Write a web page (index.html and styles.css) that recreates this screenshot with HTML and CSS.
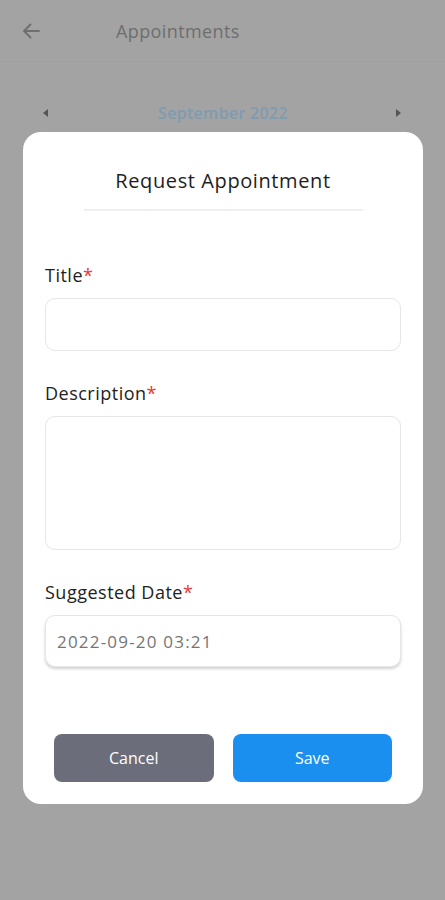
FILE: index.html
```html
<!DOCTYPE html>
<html>
<head>
<meta charset="utf-8">
<link rel="stylesheet" href="styles.css">
</head>
<body>
<div class="page">
  <header class="topbar">
    <span class="back">
      <svg width="20" height="18" viewBox="0 0 20 18"><path d="M18 9H3M9.5 2.5L3 9l6.5 6.5" fill="none" stroke="#6f6f6f" stroke-width="2" stroke-linecap="round" stroke-linejoin="round"/></svg>
    </span>
    <span class="topbar-title">Appointments</span>
  </header>
  <div class="month-row">
    <span class="tri tri-left"></span>
    <span class="month">September 2022</span>
    <span class="tri tri-right"></span>
  </div>
</div>
<div class="modal">
  <h2 class="modal-title">Request Appointment</h2>
  <div class="divider"></div>
  <label class="label label-first">Title<span class="req">*</span></label>
  <div class="field field-title"></div>
  <label class="label">Description<span class="req">*</span></label>
  <div class="field field-desc"></div>
  <label class="label">Suggested Date<span class="req">*</span></label>
  <div class="field field-date">2022-09-20 03:21</div>
  <div class="actions">
    <button class="btn btn-cancel">Cancel</button>
    <button class="btn btn-save">Save</button>
  </div>
</div>
</body>
</html>
```
FILE: styles.css
```css
* { box-sizing: border-box; }
html, body { margin: 0; padding: 0; }
body {
  width: 445px;
  height: 900px;
  background: #a3a3a3;
  font-family: "Open Sans", "Noto Sans", sans-serif;
  position: relative;
  overflow: hidden;
}
.topbar {
  height: 62px;
  display: flex;
  align-items: center;
  padding-left: 21px;
  border-bottom: 1px solid #a0a0a0;
}
.back { display: flex; width: 20px; height: 18px; }
.topbar-title {
  margin-left: 75px;
  font-size: 18px;
  letter-spacing: 0.4px;
  color: #6e6e6e;
}
.month-row {
  display: flex;
  align-items: center;
  justify-content: space-between;
  padding: 0 44px 0 43px;
  margin-top: 40px;
  height: 22px;
}
.month {
  font-size: 16px;
  font-weight: 600;
  letter-spacing: 0.3px;
  color: #7f9bb0;
  margin-left: 2px;
}
.tri { width: 0; height: 0; border-top: 4px solid transparent; border-bottom: 4px solid transparent; }
.tri-left { border-right: 5px solid #555; }
.tri-right { border-left: 5px solid #555; }
.modal {
  position: absolute;
  top: 132px;
  left: 23px;
  width: 400px;
  height: 672px;
  background: #fff;
  border-radius: 18px;
  padding: 37px 22px 22px;
  display: flex;
  flex-direction: column;
}
.modal-title {
  margin: 0;
  font-size: 20px;
  letter-spacing: 0.6px;
  font-weight: 400;
  line-height: 24px;
  text-align: center;
  color: #1e1e1e;
}
.divider {
  width: 279px;
  height: 2px;
  background: #efefef;
  align-self: center;
  margin-top: 16px;
}
.label {
  display: block;
  font-size: 18px;
  letter-spacing: 0.5px;
  line-height: 22px;
  color: #222;
  margin-top: 31px;
  margin-bottom: 12px;
}
.label-first { margin-top: 53px; }
.req { color: #e53935; }
.field {
  border: 1px solid #e6e6e6;
  border-radius: 10px;
  background: #fff;
}
.field-title { height: 53px; }
.field-desc { height: 134px; }
.field-date {
  height: 52px;
  display: flex;
  align-items: center;
  padding-left: 11px;
  font-size: 17px;
  letter-spacing: 1.2px;
  color: #757575;
  box-shadow: 0 2px 3px rgba(0,0,0,0.18);
}
.actions {
  margin-top: auto;
  display: flex;
  gap: 19px;
  padding: 0 9px;
}
.btn {
  flex: 1;
  height: 48px;
  border: none;
  border-radius: 8px;
  color: #fff;
  font-family: inherit;
  font-size: 16px;
  font-weight: 500;
}
.btn-cancel { background: #6b6d7b; }
.btn-save { background: #1b8ff0; }
```
